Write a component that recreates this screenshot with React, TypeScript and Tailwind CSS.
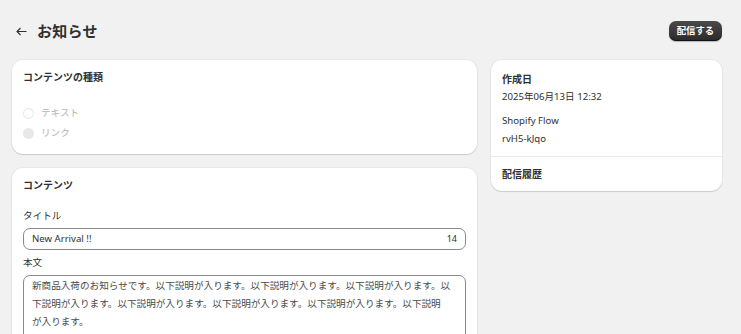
import React from "react";

const font = {
  fontFamily: '"Noto Sans", "Noto Sans CJK JP", sans-serif',
};

function Card({ children, className = "" }: { children: React.ReactNode; className?: string }) {
  return (
    <div
      className={`rounded-[11px] bg-white shadow-[0_1px_1px_rgba(0,0,0,0.12),0_0_0_1px_rgba(0,0,0,0.04)] ${className}`}
    >
      {children}
    </div>
  );
}

function Radio({ label, filled }: { label: string; filled?: boolean }) {
  return (
    <div className="flex h-[20px] items-center gap-[7px]">
      <span
        className={`block h-[11px] w-[11px] rounded-full ${
          filled ? "bg-[#e8e8e8]" : "border-[1.5px] border-[#e6e6e6] bg-white"
        }`}
      />
      <span className="text-[9.6px] text-[#b5b5b5]">{label}</span>
    </div>
  );
}

export default function App() {
  return (
    <div className="h-[334px] w-[741px] overflow-hidden bg-[#f1f1f1] text-[#303030]" style={font}>
      <div className="ml-3 w-[710px]">
        <div className="flex h-[60px] items-center justify-between pt-[2px]">
          <div className="flex items-center gap-[10px] pl-[4px]">
            <svg width="11" height="9" viewBox="0 0 11 9" fill="none" stroke="#303030" strokeWidth="1.1">
              <path d="M10.5 4.5H1M4.5 1L1 4.5L4.5 8" />
            </svg>
            <h1 className="text-[15px] font-bold leading-none tracking-[0.3px]">お知らせ</h1>
          </div>
          <button className="h-[20px] w-[53px] rounded-[7px] bg-gradient-to-b from-[#4a4a4a] to-[#2a2a2a] text-[9.4px] font-bold text-white shadow-[inset_0_-1px_0_rgba(0,0,0,0.6),0_1px_1px_rgba(0,0,0,0.25)]">
            配信する
          </button>
        </div>

        <div className="grid grid-cols-[465px_231px] gap-[14px]">
          <div className="flex flex-col gap-[14px]">
            <Card className="h-[94px] px-[11px] pt-[10px]">
              <div className="text-[10px] font-bold leading-[14px]">コンテンツの種類</div>
              <div className="mt-[19px] flex flex-col">
                <Radio label="テキスト" />
                <Radio label="リンク" filled />
              </div>
            </Card>

            <Card className="h-[200px] px-[11px] pt-[10px]">
              <div className="text-[10px] font-bold leading-[14px]">コンテンツ</div>
              <div className="mt-[17px] text-[9.6px] leading-[14px]">タイトル</div>
              <div className="mt-[5px] flex h-[22px] items-center justify-between rounded-[7px] border border-[#8a8a8a] px-[8px] text-[9.6px]">
                <span>New Arrival !!</span>
                <span className="text-[9px]">14</span>
              </div>
              <div className="mt-[6px] text-[9.6px] leading-[14px]">本文</div>
              <div className="mt-[5px] h-[90px] rounded-[7px] border border-[#8a8a8a] px-[8px] pt-[1px] text-[9.6px] leading-[18px] text-[#4a4a4a]">
                新商品入荷のお知らせです。以下説明が入ります。以下説明が入ります。以下説明が入ります。以
                <br />
                下説明が入ります。以下説明が入ります。以下説明が入ります。以下説明が入ります。以下説明
                <br />
                が入ります。
              </div>
            </Card>
          </div>

          <div>
            <Card className="h-[131px] overflow-hidden">
              <div className="px-[11px] pt-[12px]">
                <div className="text-[10px] font-bold leading-[14px]">作成日</div>
                <div className="mt-[4px] text-[9.6px] leading-[14px]">2025年06月13日 12:32</div>
                <div className="mt-[10px] text-[9.6px] leading-[14px]">Shopify Flow</div>
                <div className="mt-[4px] text-[9.6px] leading-[14px]">rvH5-kJqo</div>
              </div>
              <div className="mt-[10px] border-t border-[#ebebeb]" />
              <div className="px-[11px] pt-[10px] text-[10px] font-bold leading-[14px]">配信履歴</div>
            </Card>
          </div>
        </div>
      </div>
    </div>
  );
}
